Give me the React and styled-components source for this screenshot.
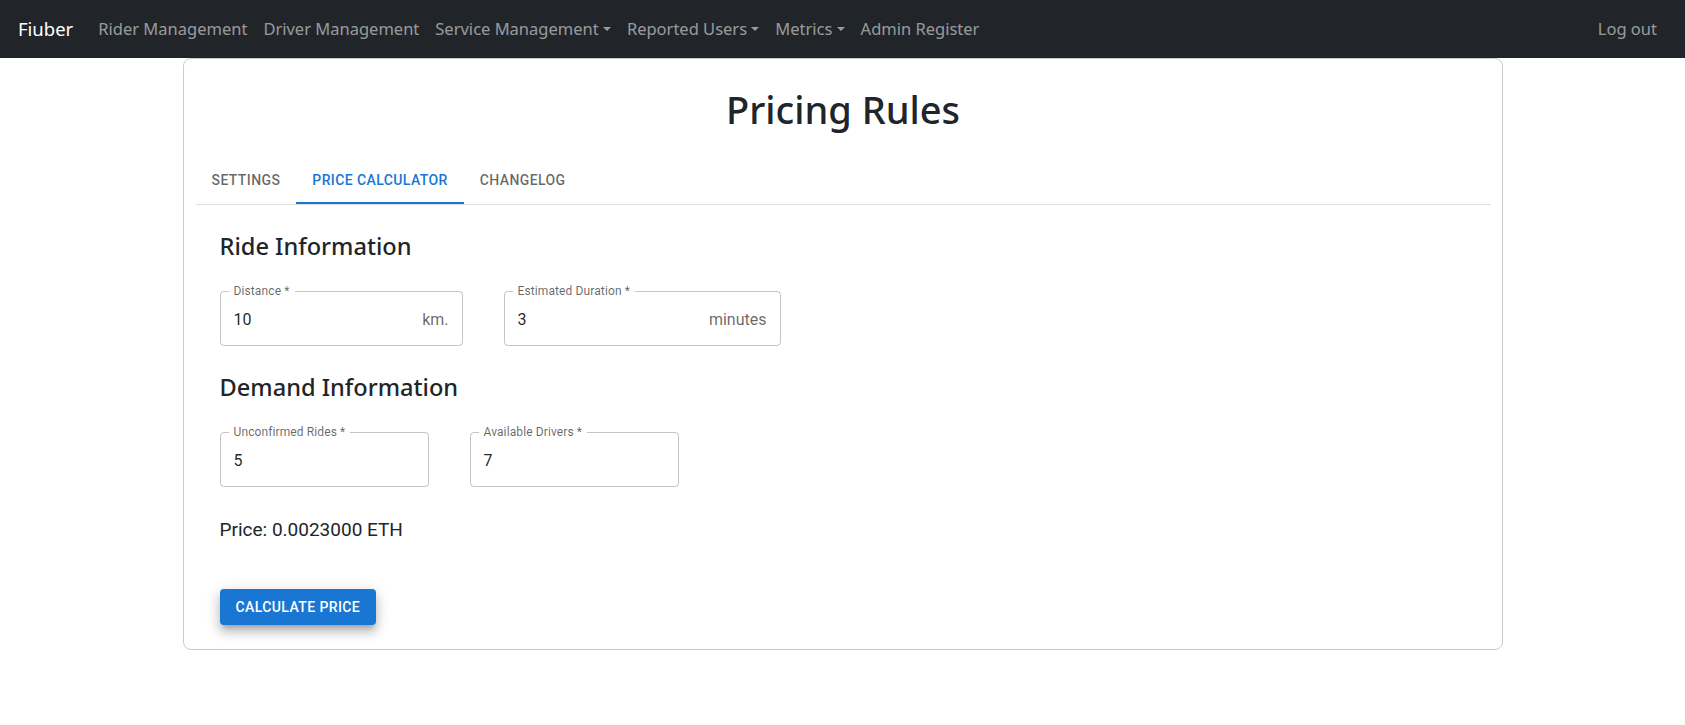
import React from 'react';
import styled, { createGlobalStyle } from 'styled-components';

const GlobalStyle = createGlobalStyle`
  body {
    margin: 0;
    background: #fff;
    font-family: "Segoe UI", "Noto Sans", "Liberation Sans", sans-serif;
    color: #212529;
  }
`;

const Navbar = styled.nav`
  height: 58px;
  background-color: #212529;
  display: flex;
  align-items: center;
  padding: 0 20px 0 18px;
`;

const Brand = styled.a`
  font-size: 18.5px;
  color: #fff;
  margin-right: 17px;
  line-height: 30px;
`;

const NavLink = styled.a`
  font-size: 16.5px;
  line-height: 24px;
  padding: 8px;
  color: rgba(255, 255, 255, 0.55);
  margin-left: ${(p) => (p.$right ? 'auto' : '0')};

  ${(p) =>
    p.$dropdown &&
    `
    &::after {
      display: inline-block;
      margin-left: .255em;
      vertical-align: .255em;
      content: "";
      border-top: .3em solid;
      border-right: .3em solid transparent;
      border-bottom: 0;
      border-left: .3em solid transparent;
    }
  `}
`;

const Container = styled.main`
  max-width: 1320px;
  margin: 0 auto;
`;

const Card = styled.section`
  border: 1px solid rgba(0, 0, 0, 0.2);
  border-radius: 8px;
  padding: 0 11px 24px 12px;
`;

const Title = styled.h1`
  margin: 26px 0 23px;
  text-align: center;
  font-size: 38px;
  font-weight: 500;
  line-height: 48px;
`;

const TabBar = styled.div`
  display: flex;
  border-bottom: 1px solid rgba(0, 0, 0, 0.12);
`;

const Tab = styled.button`
  position: relative;
  min-width: 90px;
  min-height: 48px;
  padding: 13px 16px 11px;
  border: 0;
  background: none;
  font-family: Roboto, sans-serif;
  font-weight: 500;
  font-size: 14px;
  line-height: 1.25;
  letter-spacing: 0.02857em;
  text-transform: uppercase;
  color: ${(p) => (p.$active ? '#1976d2' : 'rgba(0, 0, 0, 0.6)')};
  cursor: pointer;

  &::after {
    content: "";
    display: ${(p) => (p.$active ? 'block' : 'none')};
    position: absolute;
    left: 0;
    right: 0;
    bottom: 0;
    height: 2px;
    background: #1976d2;
  }
`;

const Panel = styled.div`
  padding: 27px 24px 0;
`;

const SectionTitle = styled.h4`
  margin: ${(p) => (p.$first ? '0' : '27px 0 0')};
  font-size: 23.6px;
  font-weight: 500;
  line-height: 28.8px;
`;

const FieldRow = styled.div`
  display: flex;
  gap: 41px;
  margin-top: 30px;
`;

const Field = styled.div`
  position: relative;
  box-sizing: border-box;
  width: ${(p) => p.$width}px;
  height: 55px;
  border: 1px solid rgba(0, 0, 0, 0.23);
  border-radius: 4px;
  padding: 0 13px;
  display: flex;
  align-items: center;
  font-family: Roboto, sans-serif;
  font-size: 16px;
`;

const FieldLabel = styled.span`
  position: absolute;
  top: -8px;
  left: 8px;
  padding: 0 5px;
  background: #fff;
  font-size: 12px;
  line-height: 15px;
  letter-spacing: 0.00938em;
  color: rgba(0, 0, 0, 0.6);
`;

const FieldValue = styled.span`
  flex: 1;
  color: rgba(0, 0, 0, 0.87);
  padding-top: 2px;
`;

const Adornment = styled.span`
  margin-left: 8px;
  color: rgba(0, 0, 0, 0.6);
  padding-top: 2px;
`;

const Price = styled.p`
  margin: 28px 0 0;
  font-family: Roboto, sans-serif;
  font-size: 19px;
  line-height: 30px;
  color: #212529;
`;

const Button = styled.button`
  margin-top: 44px;
  padding: 6px 16px;
  border: 0;
  border-radius: 4px;
  background-color: #1976d2;
  color: #fff;
  font-family: Roboto, sans-serif;
  font-weight: 500;
  font-size: 14px;
  line-height: 24.5px;
  letter-spacing: 0.02857em;
  text-transform: uppercase;
  box-shadow: 0px 5px 5px -3px rgba(0, 0, 0, 0.2), 0px 8px 10px 1px rgba(0, 0, 0, 0.14),
    0px 3px 14px 2px rgba(0, 0, 0, 0.12);
  cursor: pointer;
`;

function TextField({ label, value, unit, width }) {
  return (
    <Field $width={width}>
      <FieldLabel>{label} *</FieldLabel>
      <FieldValue>{value}</FieldValue>
      {unit && <Adornment>{unit}</Adornment>}
    </Field>
  );
}

export default function App() {
  return (
    <>
      <GlobalStyle />
      <Navbar>
        <Brand>Fiuber</Brand>
        <NavLink>Rider Management</NavLink>
        <NavLink>Driver Management</NavLink>
        <NavLink $dropdown>Service Management</NavLink>
        <NavLink $dropdown>Reported Users</NavLink>
        <NavLink $dropdown>Metrics</NavLink>
        <NavLink>Admin Register</NavLink>
        <NavLink $right>Log out</NavLink>
      </Navbar>
      <Container>
        <Card>
          <Title>Pricing Rules</Title>
          <TabBar>
            <Tab>Settings</Tab>
            <Tab $active>Price Calculator</Tab>
            <Tab>Changelog</Tab>
          </TabBar>
          <Panel>
            <SectionTitle $first>Ride Information</SectionTitle>
            <FieldRow>
              <TextField label="Distance" value="10" unit="km." width={243} />
              <TextField label="Estimated Duration" value="3" unit="minutes" width={277} />
            </FieldRow>
            <SectionTitle>Demand Information</SectionTitle>
            <FieldRow>
              <TextField label="Unconfirmed Rides" value="5" width={209} />
              <TextField label="Available Drivers" value="7" width={209} />
            </FieldRow>
            <Price>Price: 0.0023000 ETH</Price>
            <Button>Calculate Price</Button>
          </Panel>
        </Card>
      </Container>
    </>
  );
}
